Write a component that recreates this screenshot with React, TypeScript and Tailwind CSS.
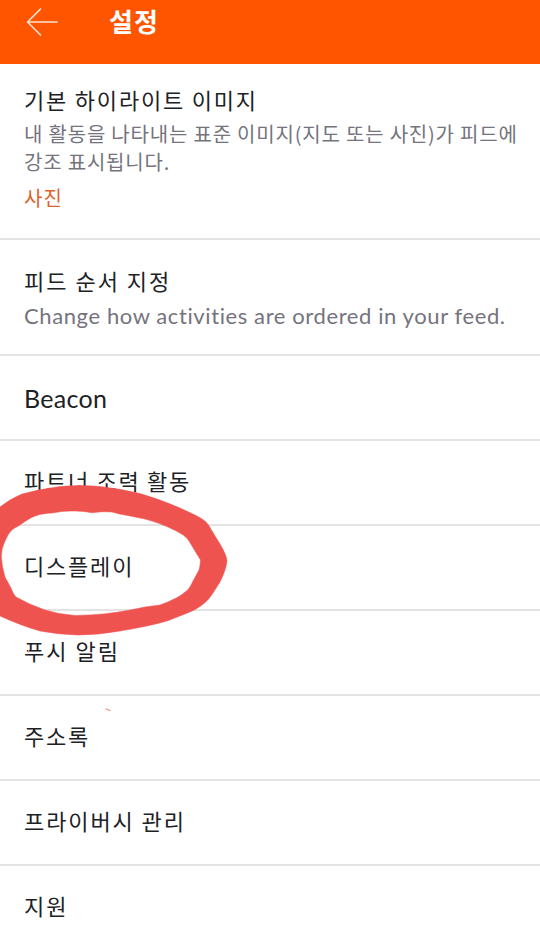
import React from "react";

const items = [
  { label: "Beacon", style: "mt-0.5 font-['Lato','Noto_Sans_CJK_KR',sans-serif] text-[25px] tracking-[0.3px]" },
  { label: "파트너 조력 활동", style: "-mt-1 tracking-[1.7px]" },
  { label: "디스플레이", style: "-mt-1 tracking-[1.8px]" },
  { label: "푸시 알림", style: "-mt-1 tracking-[2px]" },
  { label: "주소록", style: "-mt-1 tracking-[1.8px]" },
  { label: "프라이버시 관리", style: "-mt-1 tracking-[1.9px]" },
  { label: "지원", style: "-mt-1 tracking-[2px]" },
];

function Header() {
  return (
    <header className="flex h-16 shrink-0 items-start bg-[#ff5400] pl-[26px] text-white">
      <svg
        className="mt-[7px] h-[30px] w-8"
        viewBox="0 0 32 30"
        fill="none"
        stroke="#ffe3cf"
        strokeWidth="1.7"
        strokeLinecap="round"
        strokeLinejoin="round"
      >
        <path d="M31 15H1.5M14.5 2L1.5 15L14.5 28" />
      </svg>
      <h1 className="ml-[51px] mt-[5px] text-[26px] font-bold leading-8 tracking-[1px]">설정</h1>
    </header>
  );
}

function Marker() {
  return (
    <svg
      className="pointer-events-none absolute left-0 top-[480px] h-[240px] w-[240px]"
      viewBox="0 480 240 240"
    >
      <path
        fill="#ef534f"
        stroke="#ef534f"
        strokeWidth="0.5"
        strokeLinejoin="round"
        fillRule="evenodd"
        d="M-5 511L0 507Q10 499 22 494Q40 489 60 486.500Q80 484.500 100 486.500Q122 489 140 493.500Q162 500 180 508L195 515Q203 519 206 522Q209 525 212 531L220 544Q227 556 227 561Q226 570 220 582L213 593Q208 601 202 605Q196 610 185 614L167 621Q150 626 120 631Q98 635 78 635Q58 634.500 40 631Q22 626 0 616L-5 613ZM1.300 557Q1 549 5 541Q9 532 13 529L20 525Q32 516 40 514.500Q46 513 52 513Q64 510.500 75 511Q84 511 92 512.800Q103 511 112 512Q118 514 125 515L145 519Q160 523 170 528Q186 535 189 541L195 551L200.500 560Q200 567 199 570L193 581Q189 590 185 592Q179 598 160 605L145 607L130 610Q105 615 75 615.500Q58 614 45 610Q30 605 16 597Q13 594 11 588L5 577Q2 567 1.300 557Z"
      />
      <path d="M106 709L110 710.500" stroke="#f28a85" strokeWidth="1.300" strokeLinecap="round" />
      <path d="M28.500 650V652.500" stroke="#f28a85" strokeWidth="1.200" />
    </svg>
  );
}

export default function App() {
  return (
    <div className="relative flex h-[945px] w-[540px] flex-col overflow-hidden whitespace-nowrap bg-white font-['Noto_Sans_CJK_KR',sans-serif] text-[#202125]">
      <Header />

      {/* Default image */}
      <section className="h-44 shrink-0 border-b-2 border-[#e3e3e3] pl-6 pt-[19px]">
        <h2 className="text-[22px] leading-8 tracking-[1.8px]">기본 하이라이트 이미지</h2>
        <p className="mt-[5px] text-[20px] leading-7 tracking-[0.8px] text-[#75737d]">
          내 활동을 나타내는 표준 이미지(지도 또는 사진)가 피드에
          <br />
          강조 표시됩니다.
        </p>
        <p className="mt-[8px] text-[20px] leading-7 tracking-[1px] text-[#df612a]">사진</p>
      </section>

      {/* Feed order */}
      <section className="h-[116px] shrink-0 border-b-2 border-[#e3e3e3] pl-6 pt-[24px]">
        <h2 className="text-[22px] leading-8 tracking-[2px]">피드 순서 지정</h2>
        <p className="mt-1 font-['Lato','Noto_Sans_CJK_KR',sans-serif] text-[22px] leading-8 tracking-[0.6px] text-[#75737d]">
          Change how activities are ordered in your feed.
        </p>
      </section>

      <ul>
        {items.map((item) => (
          <li
            key={item.label}
            className="flex h-[85px] items-center border-b-2 border-[#e3e3e3] pl-6 text-[22px]"
          >
            <span className={item.style}>{item.label}</span>
          </li>
        ))}
      </ul>

      <Marker />
    </div>
  );
}
